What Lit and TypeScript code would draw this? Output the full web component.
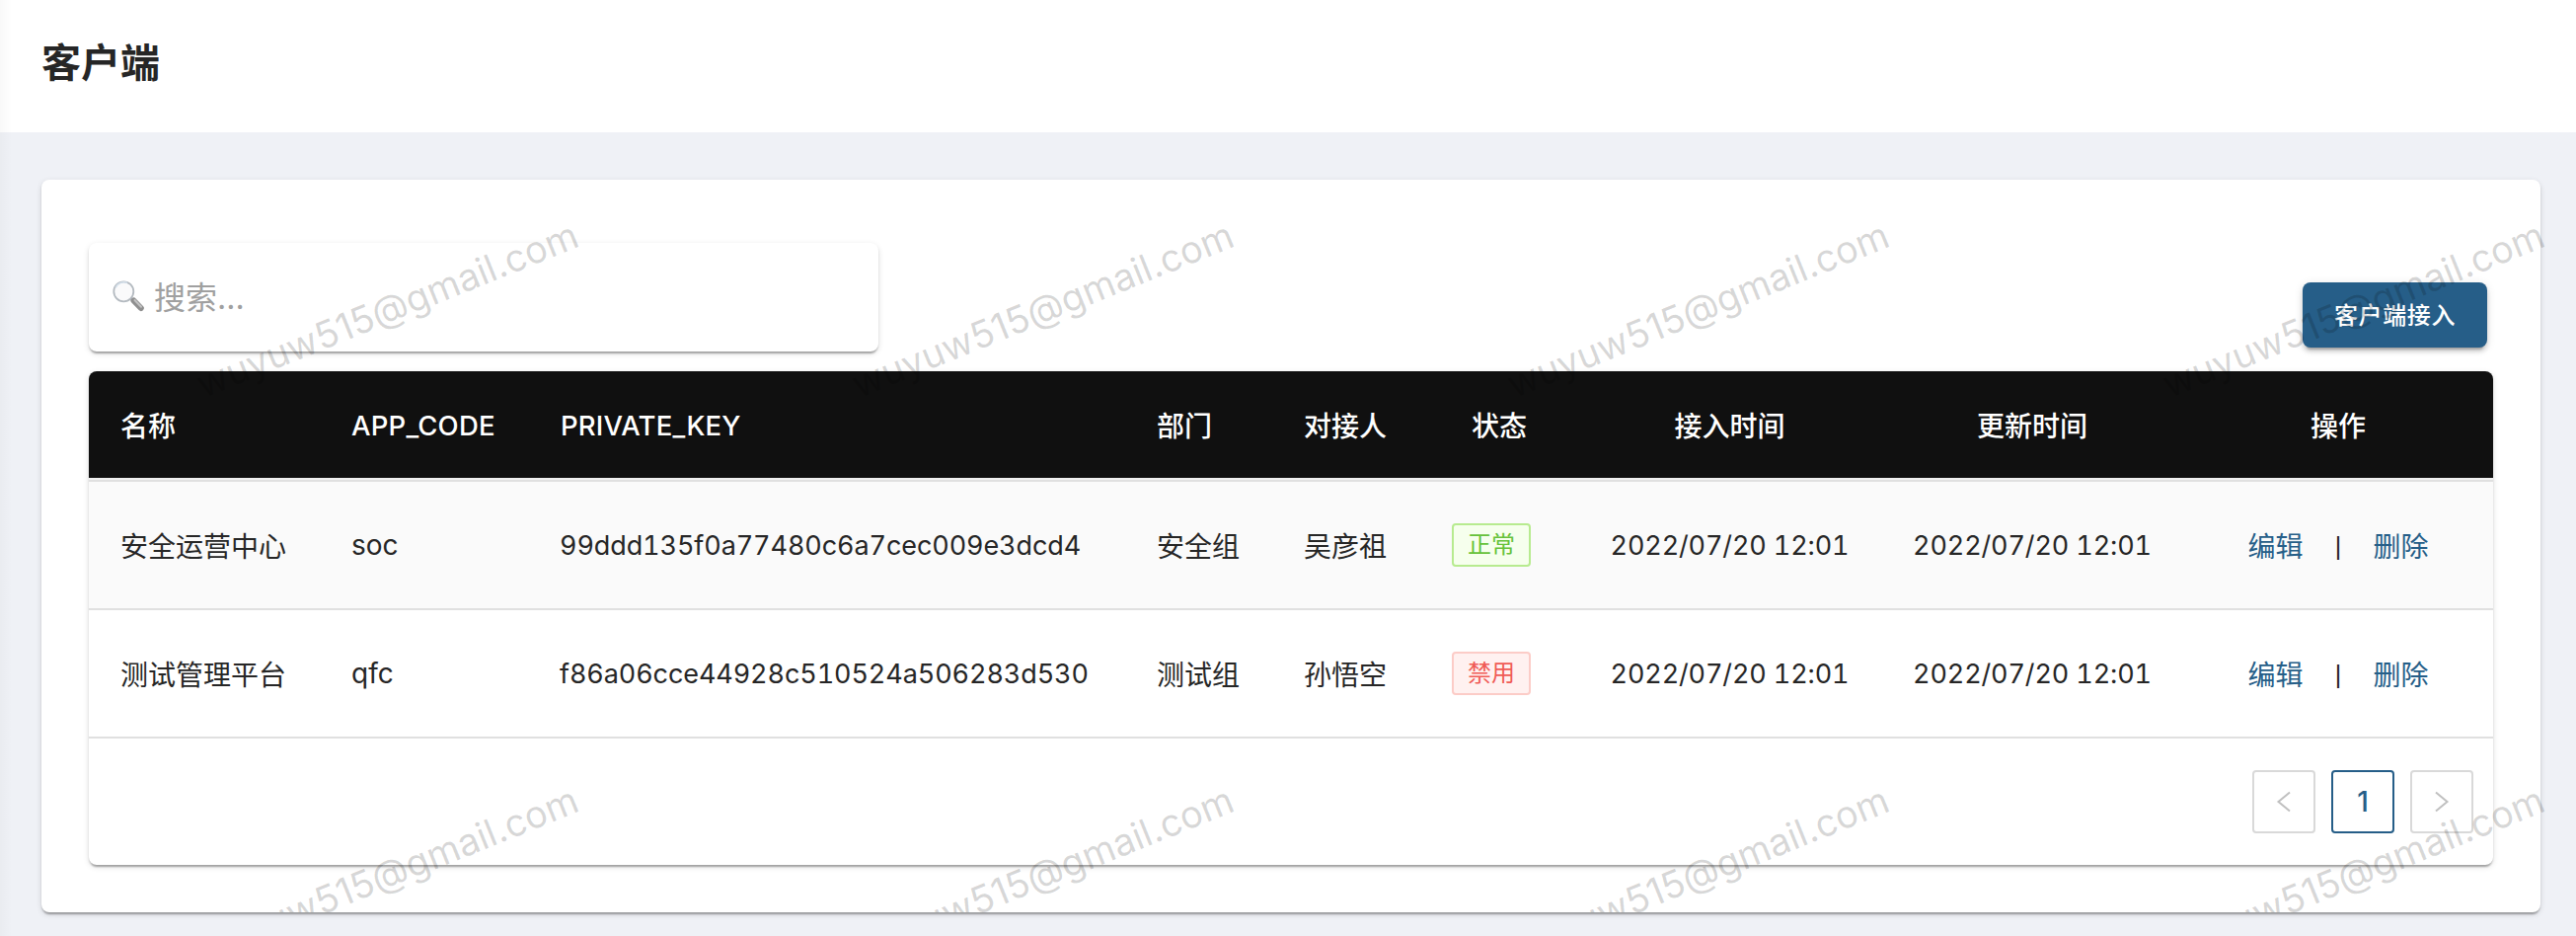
import { LitElement, html, css, svg } from "lit";
import { customElement } from "lit/decorators.js";

interface Client {
  name: string;
  code: string;
  key: string;
  dept: string;
  owner: string;
  active: boolean;
  created: string;
  updated: string;
}

const CLIENTS: Client[] = [
  { name: "安全运营中心", code: "soc", key: "99ddd135f0a77480c6a7cec009e3dcd4", dept: "安全组", owner: "吴彦祖", active: true, created: "2022/07/20 12:01", updated: "2022/07/20 12:01" },
  { name: "测试管理平台", code: "qfc", key: "f86a06cce44928c510524a506283d530", dept: "测试组", owner: "孙悟空", active: false, created: "2022/07/20 12:01", updated: "2022/07/20 12:01" },
];

@customElement("app-root")
export class AppRoot extends LitElement {
  static styles = css`
    :host {
      display: block;
      position: relative;
      height: 948px;
      overflow: hidden;
      background: #eff1f6;
      color: #262626;
      font-family: Inter, "Noto Sans CJK SC", sans-serif;
      font-size: 28px;
    }
    * { box-sizing: border-box; }
    .header {
      height: 134px;
      padding: 0 42px;
      background: #fff;
      display: flex;
      align-items: center;
    }
    h1 { margin: 0 0 7px; font-size: 40px; font-weight: 700; line-height: 56px; }
    .edge {
      position: absolute;
      inset: 0 auto 0 0;
      width: 12px;
      background: linear-gradient(90deg, rgba(0, 0, 0, 0.022), transparent);
    }
    .card {
      position: relative;
      margin: 48px 36px 0 42px;
      height: 742px;
      padding: 64px 48px 48px;
      background: #fff;
      border-radius: 8px;
      display: flex;
      flex-direction: column;
    }
    .card, .search, .table {
      box-shadow: 0 4px 2px -2px rgba(0, 0, 0, 0.2), 0 2px 2px rgba(0, 0, 0, 0.14), 0 2px 6px rgba(0, 0, 0, 0.12);
    }
    .tools { display: flex; justify-content: space-between; margin-bottom: 20px; padding-right: 6px; }
    .search {
      width: 800px;
      height: 110px;
      border-radius: 8px;
      display: flex;
      align-items: center;
      padding: 0 22px 2px 24px;
      gap: 10px;
      font-size: 32px;
      color: #a0a0a0;
    }
    .search span { padding-bottom: 3px; }
    .lens { width: 32px; height: 32px; display: block; }
    .button {
      font: inherit;
      width: 187px;
      height: 66px;
      margin-top: 40px;
      padding: 0 0 3px;
      border: 0;
      border-radius: 8px;
      background: #265e88;
      color: #fff;
      font-size: 24px;
      font-weight: 500;
      letter-spacing: 0.6px;
      white-space: nowrap;
      box-shadow: 0 6px 2px -4px rgba(0, 0, 0, 0.2), 0 4px 4px rgba(0, 0, 0, 0.14), 0 2px 10px rgba(0, 0, 0, 0.12);
    }
    .table { height: 500px; border-radius: 8px; overflow: hidden; }
    .row {
      display: grid;
      grid-template-columns: 234px 212px 604px 149px 150px 160px 307px 306px 314px;
      align-items: center;
      height: 130px;
      border-bottom: 2px solid #e0e0e0;
    }
    .row > div { padding-left: 32px; white-space: nowrap; }
    .row > .mid { padding: 0; text-align: center; }
    .row.head {
      height: 108px;
      background: #101010;
      color: #fff;
      font-weight: 500;
      border: 0;
    }
    .rule { height: 4px; background: #f0f0f0; border-bottom: 2px solid #e0e0e0; }
    .row.alt { background: #fafafa; }
    .head .latin { font-size: 27.5px; letter-spacing: 0.2px; padding-top: 2px; }
    .key, .date { font-feature-settings: "tnum"; font-size: 27px; }
    .row > .key { letter-spacing: -0.1px; padding-left: 31px; }
    .date { letter-spacing: -0.13px; }
    .tag {
      display: inline-block;
      height: 44px;
      margin-right: 16px;
      padding: 0 14px;
      border: 2px solid #b7eb8f;
      border-radius: 4px;
      background: #f6ffed;
      color: #67c23a;
      font-size: 24px;
      line-height: 40px;
      vertical-align: middle;
    }
    .tag.off { border-color: #fcccc7; background: #fff1f0; color: #f05b56; }
    .row > .ops { display: flex; justify-content: center; align-items: center; padding: 0; }
    .ops span { width: 71px; text-align: center; font: 25px "Liberation Sans", Arial, sans-serif; padding-top: 2px; }
    .ops a { color: #265e88; }
    .pager { display: flex; justify-content: flex-end; gap: 16px; padding: 32px 20px 0; }
    .page {
      width: 64px;
      height: 64px;
      border: 2px solid #d9d9d9;
      border-radius: 4px;
      color: #c0c0c0;
      display: flex;
      align-items: center;
      justify-content: center;
    }
    .page.on { border-color: #265e88; color: #265e88; font-weight: 500; }
    .marks {
      position: absolute;
      inset: 0;
      width: 2568px;
      height: 742px;
      pointer-events: none;
    }
    .marks text { font: 38px Inter, "Liberation Sans", sans-serif; fill: rgba(0, 0, 0, 0.17); }
  `;

  private arrow(d: string) {
    return html`<svg width="24" height="24" viewBox="0 0 24 24" fill="none" stroke="currentColor" stroke-width="2"><path d=${d}></path></svg>`;
  }

  private row(c: Client, i: number) {
    return html`<div class="row ${i % 2 ? "" : "alt"}">
      <div>${c.name}</div>
      <div class="latin">${c.code}</div>
      <div class="key">${c.key}</div>
      <div>${c.dept}</div>
      <div>${c.owner}</div>
      <div class="mid"><span class="tag ${c.active ? "" : "off"}">${c.active ? "正常" : "禁用"}</span></div>
      <div class="mid date">${c.created}</div>
      <div class="mid date">${c.updated}</div>
      <div class="ops"><a>编辑</a><span>|</span><a>删除</a></div>
    </div>`;
  }

  render() {
    return html`
      <div class="header"><h1>客户端</h1></div>
      <div class="card">
        <div class="tools">
          <div class="search">
            <svg class="lens" viewBox="0 0 32 32">
              <path d="M18.5 18 L21.5 21" stroke="#a9adb1" stroke-width="3"></path>
              <path d="M21.5 20.5 L28.8 28" stroke="#8f8f8f" stroke-width="6" stroke-linecap="round"></path>
              <path d="M22.5 20 L29 26.8" stroke="#c2c2c2" stroke-width="2" stroke-linecap="round"></path>
              <circle cx="11.3" cy="11.3" r="10" fill="#fafafb" stroke="#b4bac0" stroke-width="1.8"></circle>
              <path d="M3 7.5 A9.6 9.6 0 0 1 15 2.4" fill="none" stroke="#d3dfea" stroke-width="1.6"></path>
            </svg>
            <span>搜索...</span>
          </div>
          <button class="button">客户端接入</button>
        </div>
        <div class="table">
          <div class="row head">
            <div>名称</div><div class="latin">APP_CODE</div><div class="latin">PRIVATE_KEY</div><div>部门</div><div>对接人</div>
            <div class="mid">状态</div><div class="mid">接入时间</div><div class="mid">更新时间</div><div class="mid">操作</div>
          </div>
          <div class="rule"></div>
          ${CLIENTS.map((c, i) => this.row(c, i))}
          <div class="pager">
            <div class="page">${this.arrow("M18 2.5 L6.5 12 L18 21.5")}</div>
            <div class="page on">1</div>
            <div class="page">${this.arrow("M6 2.5 L17.5 12 L6 21.5")}</div>
          </div>
        </div>
        <svg class="marks">
          ${[0, 1].flatMap((r) => [0, 1, 2, 3].map((c) => svg`<text textLength="413" transform="translate(${164 + c * 664} ${221.5 + r * 572}) rotate(-22)">wuyuw515@gmail.com</text>`))}
        </svg>
      </div>
      <div class="edge"></div>
    `;
  }
}
